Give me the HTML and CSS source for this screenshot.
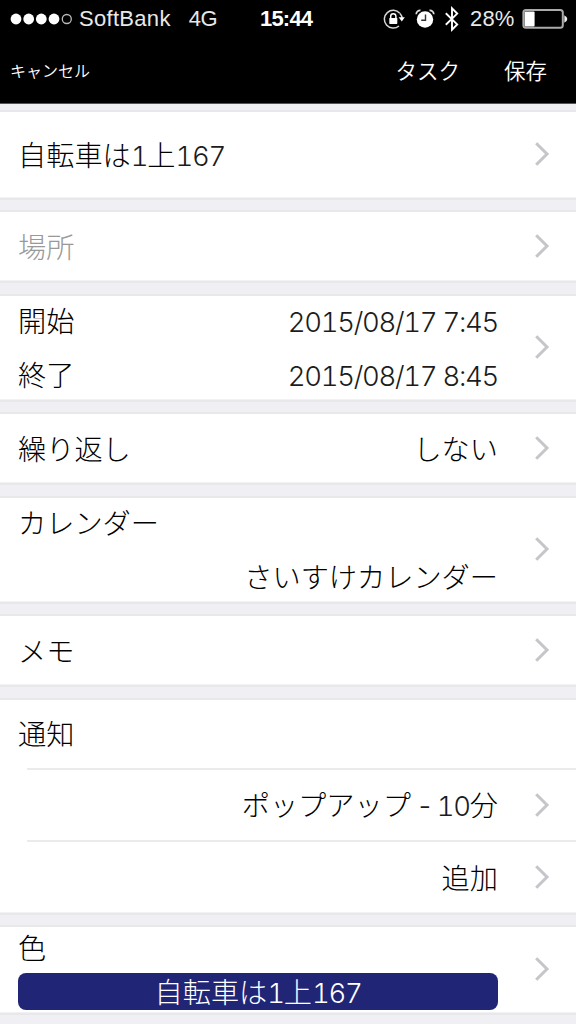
FILE: index.html
```html
<!DOCTYPE html>
<html lang="ja">
<head>
<meta charset="utf-8">
<title>予定の編集</title>
<link rel="stylesheet" href="styles.css">
</head>
<body>
<svg class="defs" width="0" height="0"><symbol id="chev" viewBox="0 0 16 26"><path d="M2.2 2.2 13 13 2.2 23.8" fill="none" stroke="#c5c5ca" stroke-width="3"/></symbol></svg>
<div class="screen">
  <header class="top">
    <div class="status">
      <div class="carrier">
        <svg class="dots" width="62" height="14" viewBox="0 0 62 14"><g fill="#fff"><circle cx="6" cy="7" r="5.4"/><circle cx="18.7" cy="7" r="5.4"/><circle cx="31.3" cy="7" r="5.4"/><circle cx="44" cy="7" r="5.4"/></g><circle cx="56.8" cy="7" r="4.5" fill="none" stroke="#bbb" stroke-width="1.3"/></svg>
        <span class="name">SoftBank</span><span class="net">4G</span>
      </div>
      <span class="clock">15:44</span>
      <div class="indicators">
        <svg class="lock" width="22" height="22" viewBox="0 0 22 22"><path d="M16.8 5.2A8.9 8.9 0 1 0 16 18M17 5.4a8.9 8.9 0 0 1 2.2 5" fill="none" stroke="#d8d8d8" stroke-width="1.5"/><path d="M15.6 9.2h6.2l-3 4.4z" fill="#fff"/><path d="M7.7 10.5V8.3a2.6 2.6 0 0 1 5.2 0v2.2" fill="none" stroke="#fff" stroke-width="1.5"/><rect x="6.3" y="9.9" width="8" height="6" rx=".6" fill="#fff"/></svg>
        <svg class="alarm" width="20" height="22" viewBox="0 0 20 22"><circle cx="10" cy="11.5" r="8.2" fill="#fff"/><path d="M1.2 6.2A4 4 0 0 1 5.5 2.3M14.5 2.3a4 4 0 0 1 4.3 3.9" fill="none" stroke="#ddd" stroke-width="1.7"/><path d="M10.5 6.5v5.7H6.2" fill="none" stroke="#333" stroke-width="1.4"/></svg>
        <svg class="bt" width="16" height="26" viewBox="0 0 16 26"><path d="M1.8 7.3 13.2 18.4 8 23.6V2.4l5.2 5.2L1.8 18.7" fill="none" stroke="#fff" stroke-width="1.9"/></svg>
        <span class="pct">28%</span>
        <svg class="batt" width="46" height="22" viewBox="0 0 46 22"><rect x="1.4" y="2" width="39.4" height="17.8" rx="2.5" fill="none" stroke="#aaa" stroke-width="2"/><rect x="2.6" y="3.4" width="10" height="15" rx="1" fill="#fff"/><path d="M42.3 7.2q3 1.4 3 3.8t-3 3.8z" fill="#eee"/></svg>
      </div>
    </div>
    <nav class="nav">
      <a class="cancel">キャンセル</a>
      <a class="task">タスク</a>
      <a class="save">保存</a>
    </nav>
  </header>
  <main>
    <section class="card title"><div class="line"><span>自転車は<i class="num">1</i>上<i class="num">167</i></span></div><svg class="chev"><use href="#chev"/></svg></section>
    <section class="card one"><div class="line hint"><span>場所</span></div><svg class="chev"><use href="#chev"/></svg></section>
    <section class="card two"><div class="lines">
      <div class="line"><span>開始</span><span class="date"><i class="num">2015/08/17 7:45</i></span></div>
      <div class="line"><span>終了</span><span class="date"><i class="num">2015/08/17 8:45</i></span></div></div><svg class="chev"><use href="#chev"/></svg></section>
    <section class="card one"><div class="line"><span>繰り返し</span><span>しない</span></div><svg class="chev"><use href="#chev"/></svg></section>
    <section class="card two"><div class="lines">
      <div class="line"><span>カレンダー</span></div>
      <div class="line end"><span>さいすけカレンダー</span></div></div><svg class="chev"><use href="#chev"/></svg></section>
    <section class="card one"><div class="line"><span>メモ</span></div><svg class="chev"><use href="#chev"/></svg></section>
    <section class="group">
      <div class="row"><div class="line"><span>通知</span></div></div>
      <div class="row ruled"><div class="line end"><span>ポップアップ<i class="num tight"> - </i><i class="num">10</i>分</span></div><svg class="chev"><use href="#chev"/></svg></div>
      <div class="row ruled"><div class="line end"><span>追加</span></div><svg class="chev"><use href="#chev"/></svg></div>
    </section>
    <section class="card color"><div class="lines">
      <div class="line"><span>色</span></div>
      <div class="swatch"><span>自転車は<i class="num">1</i>上<i class="num">167</i></span></div></div><svg class="chev"><use href="#chev"/></svg></section>
  </main>
</div>
</body>
</html>
```
FILE: styles.css
```css
* { box-sizing: border-box; }
body { margin: 0; background: #fff; overflow: hidden; }
.defs { position: absolute; }
.screen {
  width: 576px; height: 1024px; overflow: hidden; background: #efeff4;
  font: 300 28.2px/40px "Noto Sans CJK JP", sans-serif; color: #000;
}
.top { height: 104px; background: #000; color: #fff; border-bottom: 1px solid #555; }
.status {
  height: 38px; display: grid; grid-template-columns: 260px 120px 1fr; align-items: center;
  font: 400 22px/38px "Liberation Sans", Arial, sans-serif;
}
.carrier { display: flex; align-items: center; padding-left: 10px; color: #e8e8e8; }
.name { margin-left: 7px; letter-spacing: .3px; }
.net { margin-left: 18px; letter-spacing: -.5px; }
.clock { font-weight: 700; letter-spacing: -.8px; }
.indicators { display: flex; align-items: center; padding-left: 3px; color: #e8e8e8; }
.alarm { margin-left: 10px; }
.bt { margin-left: 9px; }
.pct { margin-left: 10px; width: 45px; letter-spacing: .2px; white-space: nowrap; }
.batt { margin-left: 7px; }
.nav { height: 63px; display: flex; align-items: center; padding: 0 29px 0 10px; font-weight: 350; font-size: 21.5px; color: #fff; }
.cancel { font-size: 16px; margin-right: auto; }
.save { margin-left: 44px; }
main { display: flex; flex-direction: column; gap: 14.4px; padding-top: 8px; }
.card, .group { background: #fff; box-shadow: inset 0 -1px #f2f2f4, 0 0 0 2px #e8e8eb; flex: none; }
.card, .row { display: flex; align-items: center; padding: 0 26px 2px 18px; }
.title { height: 86px; }
.title .line { padding-top: 2px; }
.one { height: 68.8px; }
.two { height: 104.4px; }
.color { height: 86px; }
.group { height: 213px; }
.row { height: 68px; }
.ruled { height: 72px; margin-left: 27px; border-top: 2px solid #ebebed; padding: 0 26px 0 0; }
.lines, .line { flex: 1; min-width: 0; }
.line { display: flex; justify-content: space-between; align-items: center; white-space: pre; }
.lines .line { height: 54px; }
.date { padding-top: 3px; }
.end { justify-content: flex-end; }
.hint { color: #999; }
.num {
  font-family: Inter, sans-serif; font-style: normal; font-size: 27.5px; font-weight: 300; color: #1c1c1c;
  font-feature-settings: "tnum"; letter-spacing: -1.3px;
}
.tight { letter-spacing: -2.2px; }
.chev { width: 16px; height: 26px; flex: none; margin-left: 36px; }
.color .lines { padding-top: 5px; }
.color .lines .line { height: 46px; margin: -8px 0 3px; }
.swatch { width: 480px; height: 37px; border-radius: 8px; background: #202575; color: #fff; text-align: center; line-height: 36px; }
.swatch .num { color: #fff; }
```
